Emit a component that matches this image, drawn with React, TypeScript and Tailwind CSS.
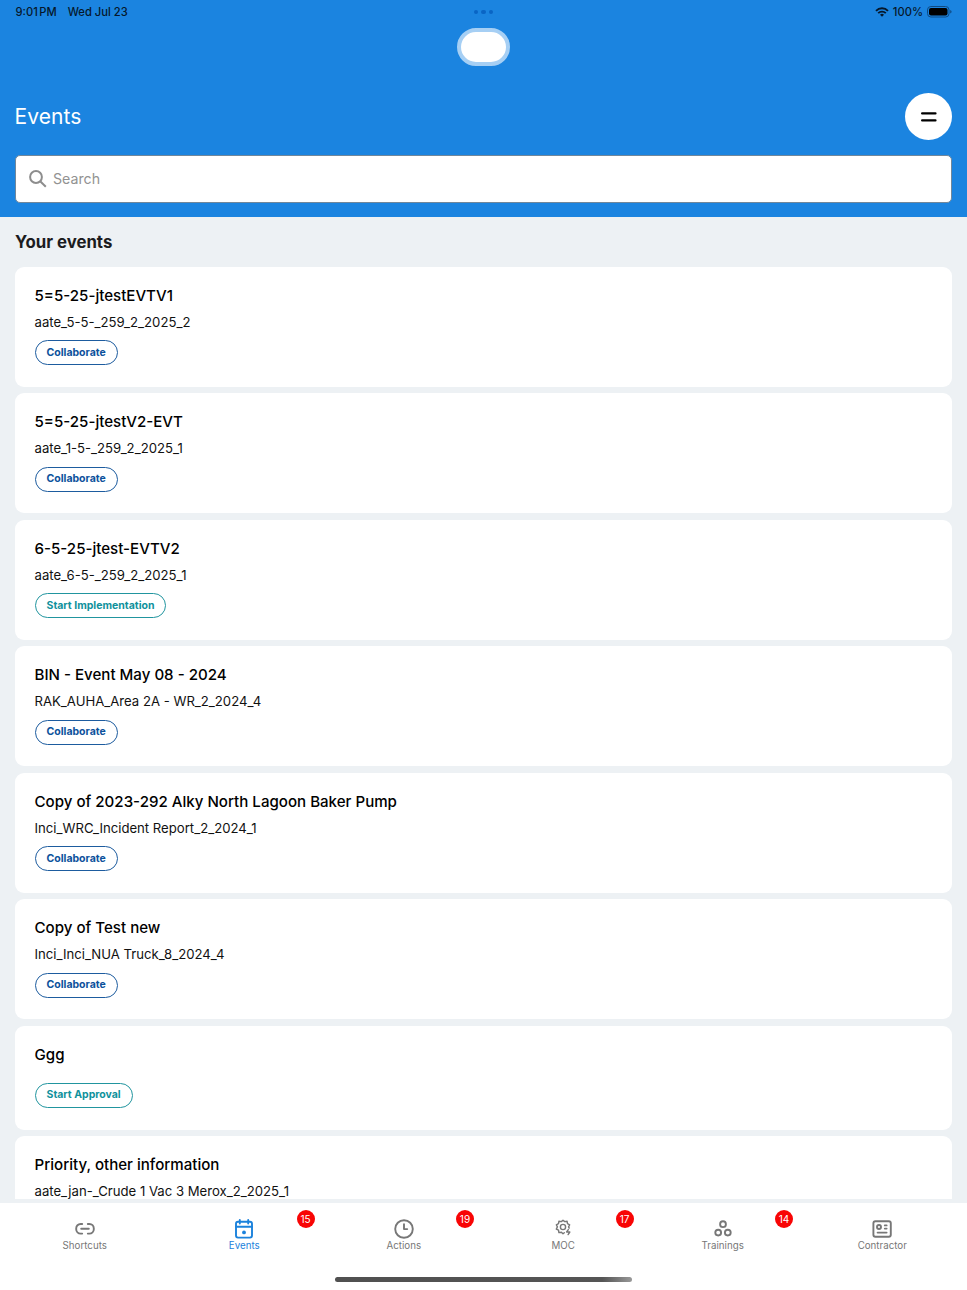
import { clsx } from "clsx";
import type { ReactNode } from "react";

type Status = "Collaborate" | "Start Implementation" | "Start Approval";

interface EventItem {
  title: string;
  code?: string;
  status: Status;
}

const events: EventItem[] = [
  { title: "5=5-25-jtestEVTV1", code: "aate_5-5-_259_2_2025_2", status: "Collaborate" },
  { title: "5=5-25-jtestV2-EVT", code: "aate_1-5-_259_2_2025_1", status: "Collaborate" },
  { title: "6-5-25-jtest-EVTV2", code: "aate_6-5-_259_2_2025_1", status: "Start Implementation" },
  { title: "BIN - Event May 08 - 2024", code: "RAK_AUHA_Area 2A - WR_2_2024_4", status: "Collaborate" },
  {
    title: "Copy of 2023-292 Alky North Lagoon Baker Pump",
    code: "Inci_WRC_Incident Report_2_2024_1",
    status: "Collaborate",
  },
  { title: "Copy of Test new", code: "Inci_Inci_NUA Truck_8_2024_4", status: "Collaborate" },
  { title: "Ggg", status: "Start Approval" },
  {
    title: "Priority, other information",
    code: "aate_jan-_Crude 1 Vac 3 Merox_2_2025_1",
    status: "Collaborate",
  },
];

function TabIcon({ children }: { children: ReactNode }) {
  return (
    <svg
      viewBox="0 0 24 24"
      className="h-6 w-6"
      fill="none"
      stroke="currentColor"
      strokeWidth="1.9"
      strokeLinecap="round"
      strokeLinejoin="round"
    >
      {children}
    </svg>
  );
}

const tabs = [
  {
    label: "Shortcuts",
    icon: (
      <TabIcon>
        <path d="M9.2 7H7.6A4.4 4.4 0 0 0 3.2 11.4v.8a4.4 4.4 0 0 0 4.4 4.4h1.6M14.8 7h1.6a4.4 4.4 0 0 1 4.4 4.4v.8a4.4 4.4 0 0 1-4.4 4.4h-1.6M8.2 11.8h7.6" />
      </TabIcon>
    ),
  },
  {
    label: "Events",
    badge: 15,
    active: true,
    icon: (
      <TabIcon>
        <rect x="4" y="4.8" width="16" height="15.8" rx="2" />
        <path d="M4 9.8h16M7.8 3v3.6M16.2 3v3.6" />
        <circle cx="12" cy="15.4" r="1.9" fill="currentColor" stroke="none" />
      </TabIcon>
    ),
  },
  {
    label: "Actions",
    badge: 19,
    icon: (
      <TabIcon>
        <circle cx="12" cy="12" r="8.8" />
        <path d="M12 7.2v4.9h3.2" />
      </TabIcon>
    ),
  },
  {
    label: "MOC",
    badge: 17,
    icon: (
      <TabIcon>
        <g strokeWidth="1.4">
          <path d="M13.3 15.8 12 16.8l-1.6-1.5-2.5.3-.4-2.5-2.2-1.1 1.1-2.1-1.1-2.1 2.2-1.1.4-2.4 2.5.3L12 3.2l1.7 1.4 2.4-.3.4 2.4 2.2 1.1-1.1 2.1.6 1.2" />
          <circle cx="12" cy="10" r="2.6" />
          <path d="m17.3 12.6-1.7 2.4h3.2l-1.7 2.6" />
        </g>
      </TabIcon>
    ),
  },
  {
    label: "Trainings",
    badge: 14,
    icon: (
      <TabIcon>
        <circle cx="12" cy="7.2" r="2.9" />
        <circle cx="7.2" cy="15.6" r="2.9" />
        <circle cx="16.8" cy="15.6" r="2.9" />
      </TabIcon>
    ),
  },
  {
    label: "Contractor",
    icon: (
      <TabIcon>
        <rect x="3.4" y="4.2" width="17.4" height="15.6" rx="2" />
        <circle cx="9" cy="10" r="2" />
        <path d="M14.8 8.4h1.8M14.8 11.6h1.8M7.6 15.6h9" />
      </TabIcon>
    ),
  },
];

function StatusBar() {
  return (
    <div className="flex h-6 items-center justify-between pr-[15px] pl-[15.5px] text-[11.2px] font-medium text-[#06182c]">
      <div className="flex gap-[11px]">
        <span className="[word-spacing:-1.5px]">9:01 PM</span>
        <span>Wed Jul 23</span>
      </div>
      <div className="flex items-center gap-1">
        <svg viewBox="0 0 14 10" className="h-2.5 w-3.5" fill="none" stroke="currentColor" strokeWidth="1.9">
          <path d="M1 3.8a8.4 8.4 0 0 1 12 0M3.2 6.2a5.3 5.3 0 0 1 7.6 0" />
          <path d="M7 9.7 5 7.8a2.9 2.9 0 0 1 4 0z" fill="currentColor" stroke="none" />
        </svg>
        <span>100%</span>
        <svg viewBox="0 0 25 12" className="h-3 w-[25px]">
          <rect x=".5" y=".5" width="21.5" height="10.5" rx="3.4" fill="none" stroke="#0f4a82" />
          <rect x="2" y="2" width="18.5" height="7.5" rx="2" fill="#000" />
          <path d="M23.2 4v3.6q1.4-.6 1.4-1.8T23.2 4" fill="#0f4a82" />
        </svg>
      </div>
    </div>
  );
}

function EventCard({ event }: { event: EventItem }) {
  return (
    <article
      className={clsx(
        "flex shrink-0 flex-col items-start rounded-[9px] bg-white px-[19.5px] pt-[18.2px]",
        event.code ? "h-[120px]" : "h-[104px]",
      )}
    >
      <h3 className="text-[15.1px] leading-[22px] font-medium text-black">{event.title}</h3>
      {event.code && <p className="mt-1.5 text-[13.15px] leading-[18px] text-[#111]">{event.code}</p>}
      <span
        className={clsx(
          "flex h-[25px] items-center rounded-full border px-[11px] text-[10.5px] font-bold",
          event.code ? "mt-[9.4px]" : "mt-[16.9px]",
          event.status === "Collaborate" ? "border-[#1d5c9f] text-[#0c519c]" : "border-[#21959f] text-[#10919c]",
        )}
      >
        {event.status}
      </span>
    </article>
  );
}

export default function App() {
  return (
    <div className="flex h-[1290px] w-[967px] flex-col overflow-hidden bg-[#edf1f4] font-['Inter',sans-serif]">
      <header className="relative h-[217px] shrink-0 bg-[#1b84e0]">
        <StatusBar />
        <div className="absolute top-[9.5px] left-[473.5px] flex gap-[3px]">
          <i className="h-[4.5px] w-[4.5px] rounded-full bg-[#0965c5]" />
          <i className="h-[4.5px] w-[4.5px] rounded-full bg-[#0965c5]" />
          <i className="h-[4.5px] w-[4.5px] rounded-full bg-[#0965c5]" />
        </div>
        <div className="absolute top-7 left-[457px] h-[38px] w-[53px] rounded-full border-4 border-[#a6cff4] bg-white" />

        <div className="mt-[69px] flex h-[47px] items-center justify-between pr-[15px] pl-[14.5px]">
          <h1 className="text-[21px] tracking-[.1px] text-white">Events</h1>
          <button className="flex h-[47px] w-[47px] items-center justify-center rounded-full bg-white">
            <svg viewBox="0 0 16 10" className="h-2.5 w-4" stroke="#000" strokeWidth="2.2" strokeLinecap="round">
              <path d="M1.1 1.4h13.4M1.1 8.4h13.4" />
            </svg>
          </button>
        </div>

        <div className="mx-[15px] mt-[15px] flex h-[47.5px] items-center gap-1.5 rounded-[5px] border border-[#71879b] bg-white pl-[13px]">
          <svg viewBox="0 0 18 18" className="h-[18px] w-[18px]" fill="none" stroke="#8d8d8d" strokeWidth="2">
            <circle cx="7" cy="7" r="5.9" />
            <path d="m11.2 11.2 5.6 5.6" />
          </svg>
          <span className="-mt-px text-[14.2px] text-[#929292]">Search</span>
        </div>
      </header>

      <main className="flex min-h-0 flex-1 flex-col overflow-hidden px-[15px]">
        <h2 className="mt-[13px] mb-[12.7px] text-[16.8px] leading-6 font-bold text-[#1b1c1e]">Your events</h2>
        <div className="flex min-h-0 flex-1 flex-col gap-[6.5px] overflow-hidden">
          {events.map((event) => (
            <EventCard key={event.title} event={event} />
          ))}
        </div>
      </main>

      <nav className="mt-1 flex h-[87px] shrink-0 flex-col items-center bg-white">
        <div className="flex w-full px-[5px]">
          {tabs.map((tab) => (
            <div
              key={tab.label}
              className={clsx(
                "relative flex h-[74px] flex-1 flex-col items-center pt-3.5",
                tab.active ? "text-[#1b82dc]" : "text-[#777]",
              )}
            >
              {tab.icon}
              <span className="-mt-px text-[9.75px] leading-3">{tab.label}</span>
              {tab.badge && (
                <span className="absolute top-[7px] right-[9.5px] flex h-[18px] w-[18px] items-center justify-center rounded-full bg-[#f80505] text-[10px] text-white">
                  {tab.badge}
                </span>
              )}
            </div>
          ))}
        </div>
        <div className="h-[5px] w-[297px] rounded-full bg-linear-to-r from-[#505050] via-[#555] via-90% to-[#999]" />
      </nav>
    </div>
  );
}
